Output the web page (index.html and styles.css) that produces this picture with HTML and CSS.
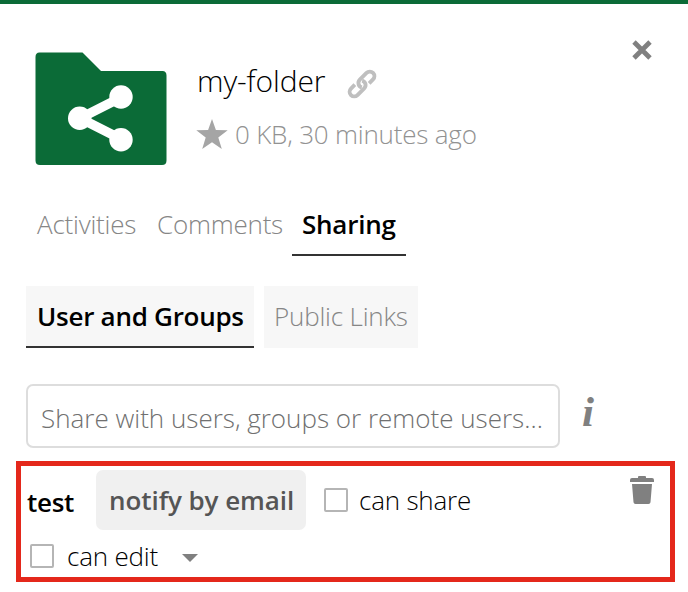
FILE: index.html
```
<!DOCTYPE html>
<html lang="en">
<head>
<meta charset="utf-8">
<title>my-folder</title>
<link rel="stylesheet" href="styles.css">
</head>
<body>
<main class="sidebar">
  <header class="file">
    <svg class="folder" viewBox="0 0 132 113" aria-hidden="true">
      <path fill="#0b6b37" d="M4.500 .5H47.500L66 19H127.500Q131.500 19 131.500 23.500V108.500Q131.500 113 127 113H5Q.500 113 .500 108.500V5Q.500 .500 4.500 .500Z"/>
      <path d="M86 45.500 45 66.200 86 87" fill="none" stroke="#fff" stroke-width="9.500"/>
      <g fill="#fff"><circle cx="86" cy="45" r="11.700"/><circle cx="44.700" cy="66.300" r="11.700"/><circle cx="86" cy="87.700" r="11.700"/></g>
    </svg>
    <div class="info">
      <div class="title-row">
        <h1 class="title">my-folder</h1>
        <svg class="link" viewBox="0 0 30 30" aria-hidden="true">
          <g fill="none" stroke="#bfbfbf" stroke-width="3.900" transform="translate(15 15) rotate(-45)">
            <path d="M5.500 4.600H11A4.600 4.600 0 0 0 11 -4.600H1.500A4.600 4.600 0 0 0 -2.500 2.300"/>
            <path d="M-5.500 -4.600H-11A4.600 4.600 0 0 0 -11 4.600H-1.500A4.600 4.600 0 0 0 2.500 -2.300"/>
          </g>
        </svg>
      </div>
      <div class="meta">
        <svg class="star" viewBox="0 0 32 30" aria-hidden="true"><path fill="#a5a5a5" d="M16 0 19.900 11.100 31.700 11.300 22.300 18.600 25.800 30 16 23.300 6.200 30 9.700 18.600.300 11.300 12.100 11.100Z"/></svg>
        <span>0 KB, 30 minutes ago</span>
      </div>
    </div>
    <svg class="close" viewBox="0 0 20 20" aria-hidden="true"><path d="M2 2 18 18M18 2 2 18" stroke="#808080" stroke-width="4.800"/></svg>
  </header>
  <nav class="tabs">
    <a class="tab activities">Activities</a>
    <a class="tab comments">Comments</a>
    <a class="tab sharing active">Sharing</a>
  </nav>
  <nav class="subtabs">
    <a class="subtab users active">User and Groups</a>
    <a class="subtab links">Public Links</a>
  </nav>
  <div class="search">
    <div class="field">Share with users, groups or remote users...</div>
    <span class="hint">i</span>
  </div>
  <section class="share">
    <div class="share-row">
      <span class="user">test</span>
      <span class="notify">notify by email</span>
      <span class="box"></span>
      <span class="label">can share</span>
      <svg class="trash" viewBox="0 0 24 28" aria-hidden="true"><path fill="#808080" d="M0 6V4Q0 2 2 2H8V1Q8 0 9 0H15Q16 0 16 1V2H22Q24 2 24 4V6ZM2 8H22L20.500 26.200Q20.300 28 18.500 28H5.500Q3.700 28 3.500 26.200Z"/></svg>
    </div>
    <div class="edit-row">
      <span class="box"></span>
      <span class="label">can edit</span>
      <span class="caret"></span>
    </div>
  </section>
</main>
</body>
</html>
```
FILE: styles.css
```
* { box-sizing: border-box; }
body {
  margin: 0;
  background: #fff;
  color: #000;
  font: 300 26px/36px "Open Sans", sans-serif;
}
.sidebar {
  height: 592px;
  border-top: 4px solid #0b6b37;
  overflow: hidden;
  white-space: nowrap;
}
.file {
  display: flex;
  align-items: flex-start;
  height: 202px;
  padding: 36px 36px 0 35px;
}
.folder { width: 132px; height: 113px; margin-top: 12px; }
.info { flex: 1; margin-left: 30px; padding-top: 21px; }
.title-row { display: flex; height: 55px; }
.title { margin: 0; width: 150px; font-size: 30px; line-height: 40px; font-weight: 300; letter-spacing: -.1px; }
.link { width: 30px; height: 30px; margin-top: 8px; }
.meta { display: flex; gap: 7px; color: #929292; letter-spacing: -.2px; }
.star { width: 32px; height: 30px; margin: 3px 0 0 -1px; }
.close { width: 20px; height: 20px; }
.tabs { display: flex; height: 50px; padding-left: 27px; color: #868686; letter-spacing: -.22px; }
.tab { padding: 0 10px; }
.activities { width: 120px; }
.comments { width: 145px; }
.sharing { width: 114px; }
.active { border-bottom: 2px solid #333; color: #000; font-weight: 600; }
.subtabs { display: flex; gap: 10px; margin: 30px 0 0 26px; color: #868686; letter-spacing: -.2px; }
.subtab { height: 62px; padding: 12px 10px 0; background: #f7f7f7; }
.users { width: 228px; padding-left: 11px; letter-spacing: -.27px; }
.links { width: 154px; }
.search { display: flex; margin: 36px 0 0 26px; }
.field {
  width: 534px;
  height: 64px;
  padding: 14px 13px 0;
  border: 2px solid #ddd;
  border-radius: 7px;
  color: #707070;
}
.hint {
  margin: 10px 0 0 22px;
  color: #808080;
  font: italic 700 43px/36px "Liberation Serif", serif;
}
.share {
  width: 659px;
  height: 121px;
  margin: 13px 0 0 16px;
  padding: 4px 15px 0 6px;
  border: 5px solid #e4281b;
}
.share-row { display: flex; height: 60px; }
.user { width: 69px; padding-top: 14px; font-weight: 600; letter-spacing: -.3px; }
.notify {
  width: 210px;
  padding: 12px 0 0 13px;
  background: #f0f0f0;
  border-radius: 7px;
  color: #555;
  font-weight: 600;
  letter-spacing: -.07px;
}
.box {
  width: 24px;
  height: 24px;
  border: 2px solid #b5b5b5;
  border-radius: 2px;
}
.share-row .box { margin: 18px 11px 0 18px; }
.share-row .label { padding-top: 12px; }
.label { letter-spacing: -.2px; }
.trash { width: 24px; height: 28px; margin: 6px 0 0 auto; transform: translateX(-1px); }
.edit-row { display: flex; padding: 8px 0 0 3px; }
.edit-row .box { margin: 6px 13px 0 0; }
.caret {
  width: 16px;
  height: 8px;
  margin: 16px 0 0 24px;
  background: #808080;
  clip-path: polygon(0 0, 100% 0, 50% 100%);
}
```
